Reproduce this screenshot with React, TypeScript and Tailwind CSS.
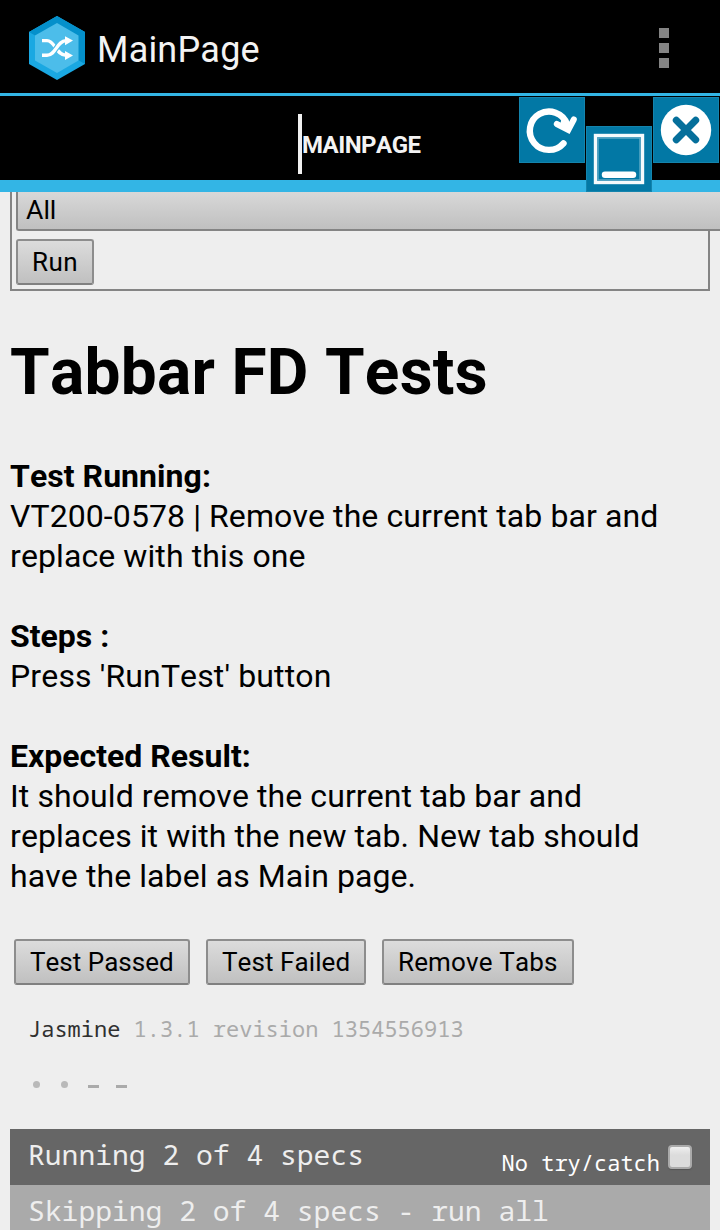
import React from "react";

const MONO = "font-['Droid_Sans_Mono','Noto_Sans_Mono','DejaVu_Sans_Mono',monospace]";

function AppLogo() {
  return (
    <svg className="block h-[64px] w-[56px]" viewBox="0 0 56 64">
      <polygon points="28,0 56,16 56,48 28,64 0,48 0,16" fill="#1aa8e2" />
      <polygon points="28,0 56,16 56,48 28,32" fill="#0490cb" />
      <polygon points="28,0 0,16 28,32" fill="#0490cb" />
      <polygon points="28,7 49.5,19.5 49.5,44.5 28,57 6,44.5 6,19.5" fill="#4cbdea" />
      <g fill="none" stroke="#fff" strokeWidth="3.4">
        <path d="M13 24.6H18C26 24.6 27 39.2 37 39.2" />
        <path d="M13 39.2H18C27 39.2 28 24.6 37 24.6" stroke="#4cbdea" strokeWidth="5.5" />
        <path d="M13 39.2H18C27 39.2 28 24.6 37 24.6" />
      </g>
      <path d="M36 20.2L44 24.6L36 29.2ZM36 35L44 39.4L36 44Z" fill="#fff" />
    </svg>
  );
}

function RefreshIcon() {
  return (
    <svg className="block size-[66px]" viewBox="0 0 66 66">
      <rect x="0.5" y="0.5" width="65" height="65" fill="#0278a5" stroke="#1484ad" />
      <path d="M44.500 46.300A19.200 19.200 0 1 1 48 27" fill="none" stroke="#fff" strokeWidth="6.400" strokeLinecap="round" />
      <path d="M37.800 27L49.300 33L54.800 22.500" fill="none" stroke="#fff" strokeWidth="6" strokeLinecap="round" />
      <path d="M43 20L51 27L49 34L41 28Z" fill="#fff" />
    </svg>
  );
}

function MinimizeIcon() {
  return (
    <svg className="block size-[66px]" viewBox="0 0 66 66">
      <rect x="0.5" y="0.5" width="65" height="65" fill="#0278a5" stroke="#1484ad" />
      <rect x="9.5" y="9.500" width="47" height="47" fill="none" stroke="#f4fafc" strokeWidth="3.400" />
      <rect x="12" y="12" width="42" height="42" fill="none" stroke="#62abc8" strokeWidth="1.400" />
      <path d="M19 48.700H47" stroke="#fff" strokeWidth="6.500" strokeLinecap="round" />
    </svg>
  );
}

function CloseIcon() {
  return (
    <svg className="block size-[66px]" viewBox="0 0 66 66">
      <rect x="0.5" y="0.5" width="65" height="65" fill="#0278a5" stroke="#1484ad" />
      <circle cx="33" cy="33" r="25.200" fill="#fff" />
      <path d="M23.300 23.300L42.700 42.700M42.700 23.300L23.300 42.700" stroke="#056f9b" strokeWidth="7" strokeLinecap="round" />
    </svg>
  );
}

function Button({ className, children }: { className: string; children: string }) {
  return (
    <button
      className={`h-[46px] rounded-[3px] border-2 border-[#8d8d8d] border-b-[#808080] bg-linear-to-b from-[#dcdcdc] to-[#c0c0c0] pl-[14px] text-left text-[26px] leading-[42px] whitespace-nowrap text-black ${className}`}
    >
      {children}
    </button>
  );
}

export default function App() {
  return (
    <div className="flex h-[1230px] w-[720px] flex-col overflow-hidden bg-[#eeeeee] font-[Roboto,sans-serif] text-black [font-kerning:none]">
      <header className="flex h-[96px] shrink-0 items-center border-b-3 border-[#33b5e5] bg-black pt-[3px] pl-[29px]">
        <AppLogo />
        <h1 className="mt-[4px] ml-[12px] text-[36px] leading-[48px] tracking-[0.2px] text-[#f3f3f3]">MainPage</h1>
        <div className="mr-[51px] ml-auto flex flex-col gap-[5px]">
          <span className="size-[10px] bg-[#848484]" />
          <span className="size-[10px] bg-[#848484]" />
          <span className="size-[10px] bg-[#848484]" />
        </div>
      </header>

      <nav className="relative flex h-[96px] shrink-0 items-center justify-center border-b-12 border-[#33b5e5] bg-black">
        <div className="flex w-[124px] items-center">
          <span className="mt-[12px] h-[60px] w-[4px] shrink-0 bg-[#f0f0f0]" />
          <span className="mt-[13px] text-[24px] leading-[32px] font-bold tracking-[-0.5px] text-[#f3f3f3]">MAINPAGE</span>
        </div>
        <div className="absolute top-px right-px flex gap-px">
          <RefreshIcon />
          <div className="mt-[29px]"><MinimizeIcon /></div>
          <CloseIcon />
        </div>
      </nav>

      <main className="flex min-h-0 grow flex-col px-[10px]">
        <section className="h-[99px] w-[700px] shrink-0 border-2 border-t-0 border-[#848484] pl-[4px]">
          <div className="h-[39px] w-[710px] rounded-bl-[3px] border-b-2 border-l-2 border-[#848484] bg-linear-to-b from-[#d8d8d8] to-[#c0c0c0] pl-[8px] text-[26.67px] leading-[36px]">
            All
          </div>
          <div className="mt-[8px] flex">
            <Button className="w-[78px] tracking-[0.5px]">Run</Button>
          </div>
        </section>

        <h2 className="mt-[42px] text-[64px] leading-[80px] font-bold tracking-[0.28px]">Tabbar FD Tests</h2>

        <div className="mt-[43px] text-[32px] leading-[40px] tracking-[0.09px] whitespace-nowrap">
          <p className="font-bold tracking-[0.05px]">Test Running:</p>
          <p>VT200-0578 | Remove the current tab bar and</p>
          <p>replace with this one</p>
          <p className="mt-[40px] font-bold tracking-[0px]">Steps :</p>
          <p className="tracking-[0.13px]">Press 'RunTest' button</p>
          <p className="mt-[40px] font-bold tracking-[0px]">Expected Result:</p>
          <p>It should remove the current tab bar and</p>
          <p className="tracking-[0.07px]">replaces it with the new tab. New tab should</p>
          <p>have the label as Main page.</p>
        </div>

        <div className="mt-[43px] ml-[4px] flex gap-[16px]">
          <Button className="w-[176px] tracking-[0.02px]">Test Passed</Button>
          <Button className="w-[160px] tracking-[0.08px]">Test Failed</Button>
          <Button className="w-[192px] tracking-[0.15px]">Remove Tabs</Button>
        </div>

        <div className={`mt-[27px] pl-[18px] text-[22px] leading-[32px] whitespace-pre text-[#aaaaaa] ${MONO}`}>
          <span className="text-[#303030]">Jasmine</span> 1.3.1 revision 1354556913
        </div>

        <div className="mt-[37px] flex h-[8px] pl-[23px]">
          <span className="mr-[21px] h-[7px] w-[7px] rounded-full bg-[#b9b9b9]" />
          <span className="mr-[20px] h-[7px] w-[7px] rounded-full bg-[#b9b9b9]" />
          <span className="mt-[4px] mr-[17px] h-[3px] w-[11px] bg-[#aaaaaa]" />
          <span className="mt-[4px] h-[3px] w-[11px] bg-[#aaaaaa]" />
        </div>

        <div className={`mt-[41px] flex h-[56px] shrink-0 bg-[#666666] pr-[18px] pl-[18px] text-[#eeeeee] ${MONO}`}>
          <span className="text-[28px] leading-[50px] whitespace-pre">Running 2 of 4 specs</span>
          <span className="ml-auto pt-[13px] text-[22px] leading-[40px] whitespace-pre text-white">No try/catch</span>
          <span className="mt-[16px] ml-[8px] size-[24px] rounded-[4px] border-2 border-[#aaaaaa] bg-linear-to-b from-[#efefef] to-[#dcdcdc] to-40% shadow-[0_1px_1px_#555555]" />
        </div>
        <div className={`h-[56px] shrink-0 bg-[#aaaaaa] pl-[18px] text-[28px] leading-[50px] whitespace-pre text-[#eeeeee] ${MONO}`}>
          Skipping 2 of 4 specs - run all
        </div>
      </main>
    </div>
  );
}
